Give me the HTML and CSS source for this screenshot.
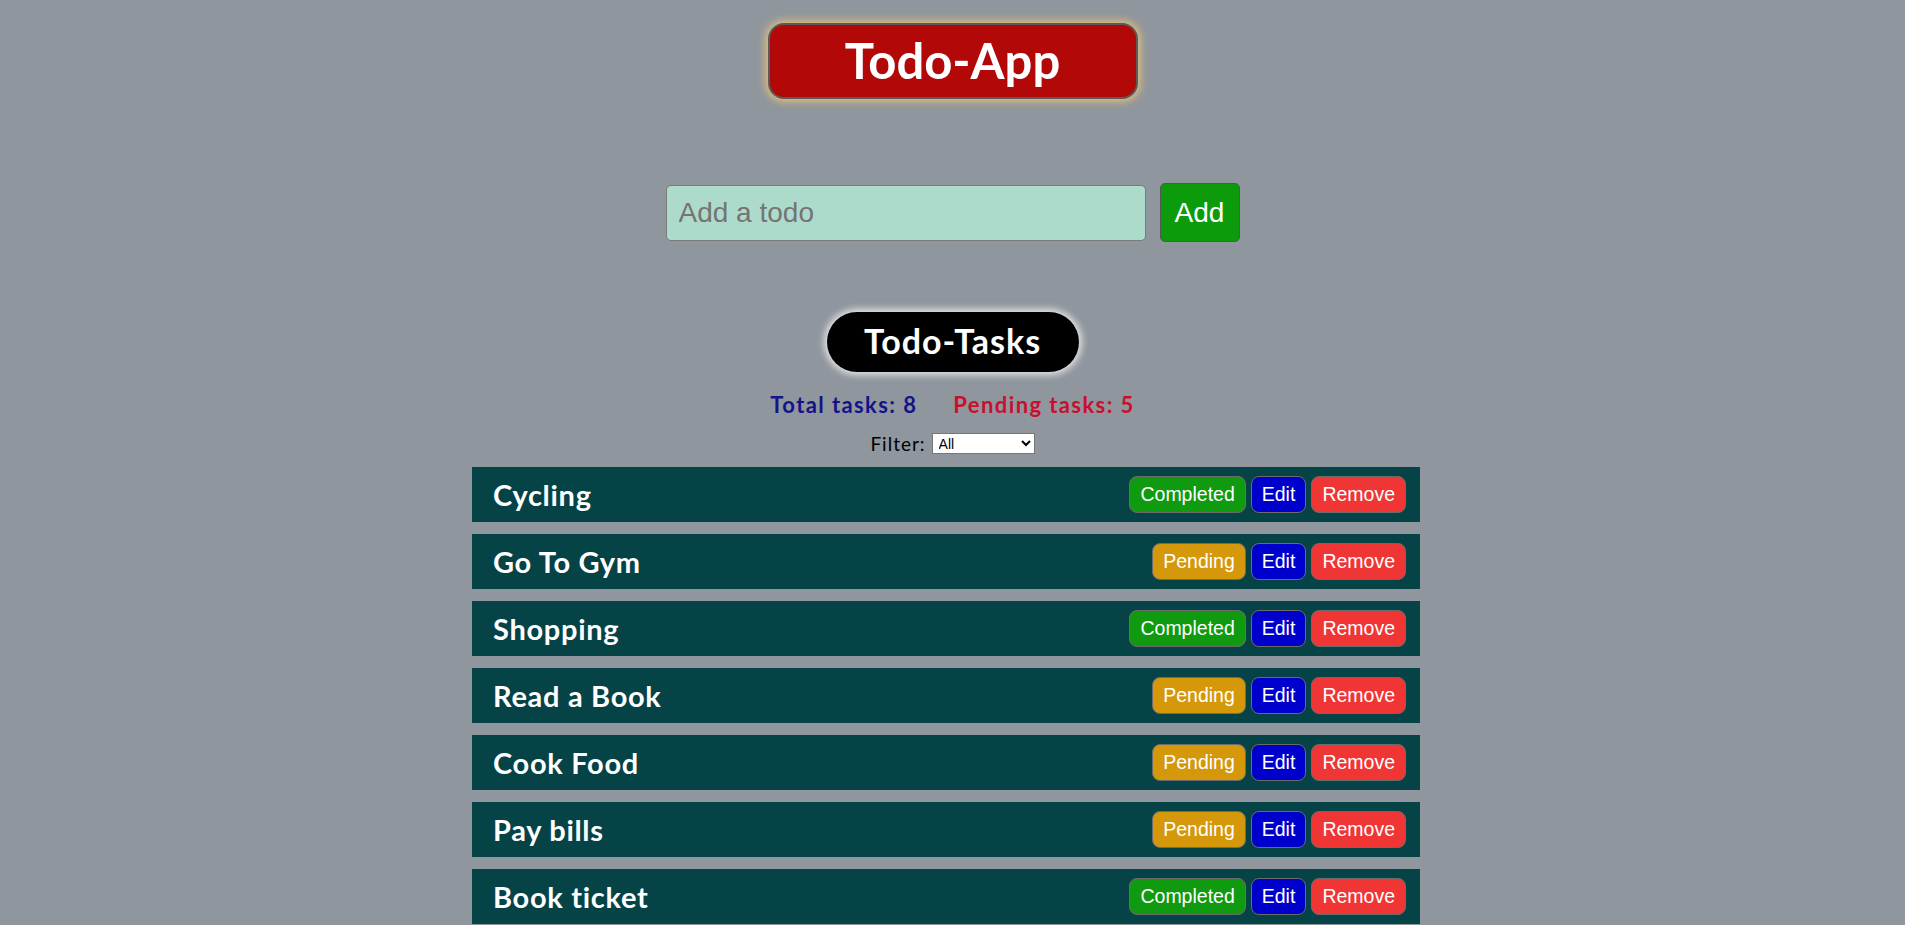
FILE: index.html
```html
<!DOCTYPE html>
<html lang="en">
<head>
<meta charset="utf-8">
<title>Todo-App</title>
<link rel="stylesheet" href="styles.css">
</head>
<body>
<div class="page">
  <header class="app-header">
    <h1 class="app-title">Todo-App</h1>
  </header>

  <form class="add-form" onsubmit="return false;">
    <input class="add-input" type="text" placeholder="Add a todo">
    <button class="add-btn" type="submit">Add</button>
  </form>

  <section class="tasks">
    <h2 class="tasks-title">Todo-Tasks</h2>
    <div class="stats">
      <span class="stat-total">Total tasks: 8</span>
      <span class="stat-pending">Pending tasks: 5</span>
    </div>
    <div class="filter">
      <label class="filter-label" for="filter">Filter:</label>
      <select class="filter-select" id="filter">
        <option>All</option>
        <option>Completed</option>
        <option>Pending</option>
      </select>
    </div>

    <ul class="task-list">
      <li class="task">
        <span class="task-name">Cycling</span>
        <div class="task-actions">
          <button class="btn btn-completed">Completed</button>
          <button class="btn btn-edit">Edit</button>
          <button class="btn btn-remove">Remove</button>
        </div>
      </li>
      <li class="task">
        <span class="task-name">Go To Gym</span>
        <div class="task-actions">
          <button class="btn btn-pending">Pending</button>
          <button class="btn btn-edit">Edit</button>
          <button class="btn btn-remove">Remove</button>
        </div>
      </li>
      <li class="task">
        <span class="task-name">Shopping</span>
        <div class="task-actions">
          <button class="btn btn-completed">Completed</button>
          <button class="btn btn-edit">Edit</button>
          <button class="btn btn-remove">Remove</button>
        </div>
      </li>
      <li class="task">
        <span class="task-name">Read a Book</span>
        <div class="task-actions">
          <button class="btn btn-pending">Pending</button>
          <button class="btn btn-edit">Edit</button>
          <button class="btn btn-remove">Remove</button>
        </div>
      </li>
      <li class="task">
        <span class="task-name">Cook Food</span>
        <div class="task-actions">
          <button class="btn btn-pending">Pending</button>
          <button class="btn btn-edit">Edit</button>
          <button class="btn btn-remove">Remove</button>
        </div>
      </li>
      <li class="task">
        <span class="task-name">Pay bills</span>
        <div class="task-actions">
          <button class="btn btn-pending">Pending</button>
          <button class="btn btn-edit">Edit</button>
          <button class="btn btn-remove">Remove</button>
        </div>
      </li>
      <li class="task">
        <span class="task-name">Book ticket</span>
        <div class="task-actions">
          <button class="btn btn-completed">Completed</button>
          <button class="btn btn-edit">Edit</button>
          <button class="btn btn-remove">Remove</button>
        </div>
      </li>
      <li class="task">
        <span class="task-name">Study</span>
        <div class="task-actions">
          <button class="btn btn-pending">Pending</button>
          <button class="btn btn-edit">Edit</button>
          <button class="btn btn-remove">Remove</button>
        </div>
      </li>
    </ul>
  </section>
</div>
</body>
</html>
```

FILE: styles.css
```css
* {
  box-sizing: border-box;
}

html, body {
  margin: 0;
  padding: 0;
  background: #8f969d;
}

body {
  font-family: "Lato", "Open Sans", "DejaVu Sans", sans-serif;
  color: #000;
}

.page {
  display: flex;
  flex-direction: column;
  align-items: center;
  padding-top: 23px;
}

.app-header {
  display: flex;
  justify-content: center;
}

.app-title {
  margin: 0;
  width: 370px;
  height: 76px;
  display: flex;
  align-items: center;
  justify-content: center;
  background: #b30808;
  color: #fff;
  border: 2px solid #5a5a5a;
  border-radius: 16px;
  box-shadow: 0 0 8px 2px #e9c27a;
  font-size: 49px;
  font-weight: 700;
  line-height: 1;
  padding-bottom: 2px;
}

.add-form {
  margin-top: 84px;
  display: flex;
  align-items: center;
  gap: 14px;
}

.add-input {
  width: 480px;
  height: 56px;
  background: #addbcb;
  border: 1px solid #7a7a7a;
  border-radius: 5px;
  padding: 0 12px;
  font-family: "Liberation Sans", Arial, sans-serif;
  font-size: 28px;
  color: #222;
  outline: none;
}

.add-input::placeholder {
  color: #747474;
}

.add-btn {
  width: 80px;
  height: 59px;
  background: #0b9b0b;
  color: #fff;
  border: 1px solid #555;
  border-radius: 5px;
  font-family: "Liberation Sans", Arial, sans-serif;
  font-size: 28px;
  padding: 0;
}

.tasks {
  width: 100%;
  display: flex;
  flex-direction: column;
  align-items: center;
  margin-top: 70px;
}

.tasks-title {
  margin: 0;
  width: 252px;
  height: 60px;
  display: flex;
  align-items: center;
  justify-content: center;
  background: #000;
  color: #fff;
  border-radius: 30px;
  box-shadow: 0 0 7px 3px rgba(255, 255, 255, 0.75);
  font-size: 34px;
  font-weight: 700;
  letter-spacing: 1px;
  line-height: 1;
  padding-bottom: 2px;
}

.stats {
  margin-top: 20px;
  display: flex;
  gap: 36px;
  font-size: 22px;
  font-weight: 700;
  letter-spacing: 1.4px;
  line-height: 26px;
}

.stat-total {
  color: #13138a;
}

.stat-pending {
  color: #c8102e;
}

.filter {
  margin-top: 14px;
  display: flex;
  align-items: center;
  gap: 6px;
  font-size: 19px;
  letter-spacing: 1px;
  line-height: 23px;
}

.filter-select {
  width: 103px;
  height: 21px;
  font-family: "Liberation Sans", Arial, sans-serif;
  font-size: 14px;
  letter-spacing: 0;
  background: #fff;
  border: 1px solid #767676;
  border-radius: 0;
  padding: 0 2px;
}

.task-list {
  list-style: none;
  margin: 12px 0 0 calc(50% - 480.5px);
  align-self: flex-start;
  padding: 0;
  width: 948px;
  display: flex;
  flex-direction: column;
  gap: 12px;
}

.task {
  height: 55px;
  background: #054347;
  display: flex;
  align-items: center;
  justify-content: space-between;
  padding: 0 14px 0 21px;
}

.task-name {
  color: #fff;
  font-size: 29px;
  font-weight: 700;
  letter-spacing: 0.7px;
}

.task-actions {
  display: flex;
  gap: 5px;
}

.btn {
  font-family: "Liberation Sans", Arial, sans-serif;
  font-size: 19.5px;
  color: #fff;
  height: 37px;
  padding: 0 10px;
  border: 1px solid #6b6b6b;
  border-radius: 8px;
  line-height: 1;
}

.btn-completed {
  background: #0f9a0f;
}

.btn-pending {
  background: #d4980a;
}

.btn-edit {
  background: #0000cc;
}

.btn-remove {
  background: #f03535;
}
```
